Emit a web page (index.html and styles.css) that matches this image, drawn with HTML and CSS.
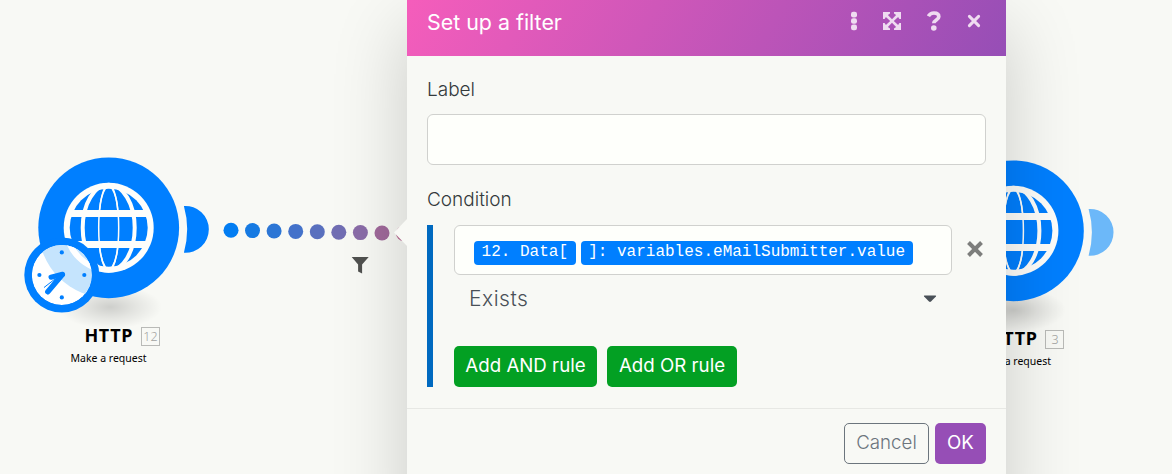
FILE: index.html
```html
<!DOCTYPE html>
<html lang="en">
<head>
<meta charset="utf-8">
<title>Scenario editor</title>
<link rel="stylesheet" href="styles.css">
</head>
<body>
<main class="canvas">
  <svg class="graph" width="1172" height="474" viewBox="0 0 1172 474" aria-hidden="true">
    <defs>
      <radialGradient id="ground">
        <stop offset="0" stop-color="#000" stop-opacity=".17"/>
        <stop offset=".5" stop-color="#000" stop-opacity=".08"/>
        <stop offset="1" stop-color="#000" stop-opacity="0"/>
      </radialGradient>
      <clipPath id="face"><circle cx="61.8" cy="275" r="30"/></clipPath>
      <g id="globe">
        <circle r="45" fill="#fefefb"/>
        <circle r="39" fill="#007fff"/>
        <g fill="none" stroke="#fefefb">
          <ellipse rx="26" ry="43" stroke-width="4"/>
          <path d="M-4-40C-12-22-12 22-4 40M4-40C12-22 12 22 4 40" stroke-width="1.5"/>
          <path d="M-3-40Q-8-32-9-18M3-40Q8-32 9-18M-3 40Q-8 32-9 20M3 40Q8 32 9 20" stroke-width="1.5"/>
          <path d="M-38-14.3H38M-38 16.6H38" stroke-width="7"/>
        </g>
      </g>
      <path id="port" d="M75.2-21.8A23.4 23.4 0 1 1 75.2 24.9Q81.8 1.5 75.2-21.8Z"/>
    </defs>

    <ellipse cx="110" cy="307" rx="52" ry="22" fill="url(#ground)"/>
    <g transform="translate(108.7 227.8)">
      <circle r="70.4" fill="#007fff"/>
      <use href="#globe"/>
      <use href="#port" fill="#007fff"/>
    </g>
    <circle cx="61.8" cy="275" r="37.5" fill="#007fff"/>
    <g clip-path="url(#face)">
      <circle cx="61.8" cy="275" r="30" fill="#fff"/>
      <circle cx="108.7" cy="227.8" r="70.4" fill="#c5e4fd"/>
      <circle cx="108.7" cy="227.8" r="42" fill="#c5e4fd" stroke="#fff" stroke-width="6"/>
    </g>
    <g fill="#007fff">
      <circle cx="61.8" cy="252.4" r="2.1"/><circle cx="61.8" cy="297.4" r="2.1"/>
      <circle cx="39.4" cy="275" r="2.1"/><circle cx="84.3" cy="275" r="2.1"/>
    </g>
    <g stroke="#007fff" stroke-linecap="round" fill="none">
      <path d="M62.6 274.3 51 277.2" stroke-width="5"/>
      <path d="M62.2 274.8 47.8 291.8" stroke-width="5.4"/>
      <path d="M44.3 287.3 55 279" stroke-width="1"/>
    </g>

    <g>
      <circle cx="231" cy="230.2" r="7.5" fill="#027df2"/>
      <circle cx="252.5" cy="230.6" r="7.5" fill="#167ae2"/>
      <circle cx="274.1" cy="231" r="7.5" fill="#2c76d5"/>
      <circle cx="295.7" cy="231.4" r="7.5" fill="#4372ca"/>
      <circle cx="317.3" cy="231.7" r="7.5" fill="#5970be"/>
      <circle cx="338.8" cy="232.2" r="7.5" fill="#716eb3"/>
      <circle cx="360.4" cy="232.6" r="7.5" fill="#8a6ca8"/>
      <circle cx="382" cy="233" r="7.5" fill="#a0699b"/>
      <circle cx="403.5" cy="233.4" r="7.5" fill="#b76790"/>
    </g>
    <path d="M351.7 257h17l-6.6 7.6v9l-4-2v-7Z" fill="#50514f"/>

    <ellipse cx="1014" cy="310" rx="52" ry="22" fill="url(#ground)"/>
    <g transform="translate(1013.4 230.8)">
      <circle r="70.4" fill="#007fff"/>
      <use href="#globe"/>
      <use href="#port" fill="#6cb8f9"/>
    </g>
  </svg>

  <div class="caption caption-first">
    <div class="caption-title">HTTP <span class="badge">12</span></div>
    <div class="caption-sub">Make a request</div>
  </div>
  <div class="caption caption-last">
    <div class="caption-title">HTTP <span class="badge">3</span></div>
    <div class="caption-sub">Make a request</div>
  </div>

  <section class="panel">
    <svg class="notch" width="14" height="28" viewBox="0 0 14 28" aria-hidden="true"><path d="M14 0V27L1 13.5Z" fill="#f8f9f5"/></svg>
    <header class="panel-head">
      <h1>Set up a filter</h1>
      <div class="tools">
        <svg width="6" height="20" viewBox="0 0 6 20"><g fill="currentColor"><rect y="0.8" width="6" height="5.6" rx="2.2"/><rect y="7.2" width="6" height="5.6" rx="2.2"/><rect y="13.6" width="6" height="5.6" rx="2.2"/></g></svg>
        <svg width="18" height="18" viewBox="0 0 18 18"><path d="M0 0h7v1.6L4.9 2.9 9 7.2l4.1-4.3L11 1.6V0h7v7h-1.6l-1.3-2.1L10.8 9l4.3 4.1 1.3-2.1H18v7h-7v-1.6l2.1-1.3L9 10.8l-4.1 4.3L7 16.4V18H0v-7h1.6l1.3 2.1L7.2 9 2.9 4.9 1.6 7H0Z" fill="currentColor"/></svg>
        <svg width="14" height="20" viewBox="0 0 14 20"><path d="M1.4 5.2Q3.2 2 7 2q4.8 0 4.8 3.7c0 3.4-5 3.1-5 6.6" fill="none" stroke="currentColor" stroke-width="3.7"/><circle cx="6.8" cy="17" r="2.8" fill="currentColor"/></svg>
        <svg width="14" height="14" viewBox="0 0 14 14"><path d="m2.4 2.4 9.2 9.2M11.6 2.4l-9.2 9.2" stroke="currentColor" stroke-width="3" stroke-linecap="round"/></svg>
      </div>
    </header>
    <div class="panel-body">
      <label class="field-label">Label</label>
      <div class="text-input"></div>
      <div class="field-label condition-label">Condition</div>
      <div class="condition">
        <div class="operand-row">
          <div class="operand"><span class="token">12. Data[</span><span class="token">]: variables.eMailSubmitter.value</span></div>
          <svg class="remove" width="18" height="18" viewBox="0 0 18 18"><path d="m2.5 2.5 13 13M15.5 2.5l-13 13" stroke="#7d7e7c" stroke-width="4"/></svg>
        </div>
        <div class="operator"><span>Exists</span><svg width="14" height="8" viewBox="0 0 14 8"><path d="M1.6.5h10.8q1.2 0 .5 1L8 6.6q-1 .9-2 0L1.1 1.5q-.7-1 .5-1Z" fill="#495057"/></svg></div>
        <div class="rules"><button class="rule rule-and">Add AND rule</button><button class="rule rule-or">Add OR rule</button></div>
      </div>
    </div>
    <footer class="panel-foot"><button class="cancel">Cancel</button><button class="ok">OK</button></footer>
  </section>
</main>
</body>
</html>
```
FILE: styles.css
```css
* { box-sizing: border-box; }
body { margin: 0; background: #f8f9f5; font-family: Inter, "Liberation Sans", sans-serif; }
.canvas { position: relative; width: 1172px; height: 474px; overflow: hidden; }
.graph { display: block; }

.caption { position: absolute; color: #000; font-family: "Noto Sans", sans-serif; white-space: nowrap; }
.caption-first { left: 70.5px; top: 322px; }
.caption-last { left: 975px; top: 325px; }
.caption-title { display: flex; align-items: center; gap: 8px; height: 26px; padding-left: 14px; font-size: 18px; font-weight: 700; letter-spacing: .6px; }
.badge { display: flex; align-items: center; justify-content: center; width: 19px; height: 19px; margin-top: 3px; border: 1px solid #b9bab7; color: #a1a29f; font-size: 12.5px; font-weight: 300; letter-spacing: 0; }
.caption-sub { height: 20px; font-size: 10.5px; line-height: 20px; }

.panel { position: absolute; left: 407px; top: 0; width: 599px; height: 520px; background: #f8f9f5; box-shadow: 0 28px 70px rgba(0, 0, 0, .19); }
.notch { position: absolute; left: -14px; top: 219px; }
.panel-head { display: flex; justify-content: space-between; height: 56px; padding: 0 25px 0 20px; background: linear-gradient(120deg, #f55dbb 0%, #964eb6 100%); }
.panel-head h1 { margin: 0; color: #fff; font-size: 21.4px; font-weight: 400; line-height: 45px; }
.tools { display: flex; align-items: center; height: 42px; color: #efdcf1; }
.tools svg { margin-left: 26px; }

.panel-body { height: 352px; padding: 20px 20px 0; }
.field-label { display: block; height: 28px; color: #343a3c; font-size: 19px; font-weight: 300; line-height: 27px; }
.text-input { height: 51px; margin-top: 10px; border: 1px solid #d0d1ce; border-radius: 6px; background: #fefffb; }
.condition-label { margin-top: 21px; }
.condition { height: 162px; margin-top: 11px; padding-left: 21px; border-left: 6px solid #006ac0; }
.operand-row { display: flex; align-items: center; gap: 14px; }
.operand { display: flex; align-items: center; gap: 5px; width: 498px; height: 50px; padding: 5px 0 0 19px; border: 1px solid #d0d1ce; border-radius: 6px; background: #fefffb; }
.token { height: 24px; padding: 0 7.6px; border-radius: 4px; background: #007fff; color: #fff; font: 16px/22px "Courier New", "Liberation Mono", monospace; white-space: pre; }
.remove { flex: none; margin-top: -2px; }
.operator { display: flex; align-items: center; justify-content: space-between; width: 483px; height: 47px; padding-left: 15px; color: #495057; font-size: 21px; font-weight: 300; letter-spacing: .5px; }
.rules { display: flex; gap: 10px; margin-top: 24px; }
button { margin: 0; padding: 0 0 3px; border: 0; border-radius: 5px; font: 400 18.7px Inter, "Liberation Sans", sans-serif; height: 41px; white-space: nowrap; }
.rule { background: #03a023; color: #fff; }
.rule-and { width: 143px; }
.rule-or { width: 130px; }
.panel-foot { display: flex; justify-content: flex-end; gap: 6px; height: 112px; padding: 14px 20px 0; border-top: 1px solid #e7e8e4; }
.cancel { width: 85px; border: 1px solid #6c757d; background: transparent; color: #6c757d; font-weight: 300; }
.ok { width: 51px; background: #964eb6; color: #fff; }
```
